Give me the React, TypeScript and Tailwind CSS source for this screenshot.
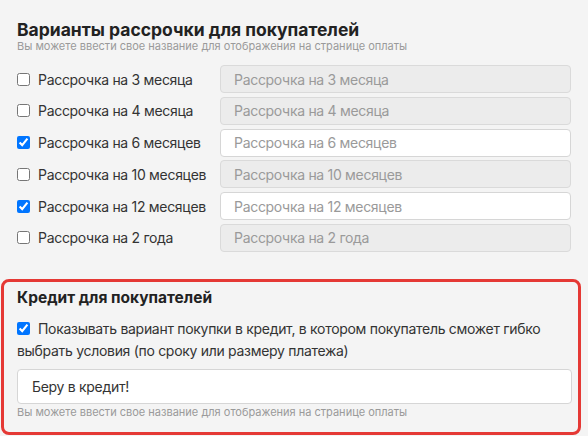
const options = [
  { label: 'Рассрочка на 3 месяца', checked: false },
  { label: 'Рассрочка на 4 месяца', checked: false },
  { label: 'Рассрочка на 6 месяцев', checked: true },
  { label: 'Рассрочка на 10 месяцев', checked: false },
  { label: 'Рассрочка на 12 месяцев', checked: true },
  { label: 'Рассрочка на 2 года', checked: false },
];

export default function App() {
  return (
    <div
      className="w-[588px] h-[436px] overflow-hidden bg-[#f4f4f4] text-[#333]"
      style={{ fontFamily: 'Inter, "Liberation Sans", sans-serif' }}
    >
      {/* Installment options */}
      <div className="px-[17px] pt-[20px]">
        <h2 className="text-[17.5px] leading-[20px] font-bold text-[#222]">
          Варианты рассрочки для покупателей
        </h2>
        <p className="text-[11px] leading-[13px] text-[#9a9a9a]">
          Вы можете ввести свое название для отображения на странице оплаты
        </p>

        <div className="mt-[12px] flex flex-col gap-[3.75px]">
          {options.map((o) => (
            <div key={o.label} className="flex items-center">
              <label className="w-[203px] flex items-center gap-[8px] text-[14px] tracking-[-0.3px]">
                <input type="checkbox" defaultChecked={o.checked} className="w-[13px] h-[13px] m-0" />
                {o.label}
              </label>
              <input
                type="text"
                disabled={!o.checked}
                placeholder={o.label}
                className={
                  o.checked
                    ? 'flex-1 h-[28px] px-[13px] text-[14px] tracking-[-0.3px] rounded-[4px] border border-[#d6d6d6] bg-white placeholder:text-[#9a9a9a] outline-none'
                    : 'flex-1 h-[28px] px-[13px] text-[14px] tracking-[-0.3px] rounded-[4px] border border-[#dadada] bg-[#ececec] placeholder:text-[#9a9a9a] outline-none'
                }
              />
            </div>
          ))}
        </div>
      </div>

      {/* Credit */}
      <div className="mt-[27px] ml-[1px] mr-[7px] border-[3px] border-[#e53935] rounded-[8px] pl-[13px] pr-[6px] pt-[7px] pb-[14px]">
        <h3 className="text-[15.5px] leading-[18px] font-bold text-[#222]">Кредит для покупателей</h3>
        <p className="mt-[11px] text-[14px] leading-[22px] tracking-[-0.3px]">
          <input type="checkbox" defaultChecked className="w-[13px] h-[13px] m-0 mr-[8px] align-[-1px]" />
          Показывать вариант покупки в кредит, в котором покупатель сможет гибко
          <br />
          выбрать условия (по сроку или размеру платежа)
        </p>
        <input
          type="text"
          defaultValue="Беру в кредит!"
          className="mt-[7px] w-full h-[35px] px-[14px] text-[14px] tracking-[-0.3px] rounded-[4px] border border-[#d6d6d6] bg-white outline-none"
        />
        <p className="mt-[2px] text-[11px] leading-[12px] text-[#9a9a9a]">
          Вы можете ввести свое название для отображения на странице оплаты
        </p>
      </div>
    </div>
  );
}
